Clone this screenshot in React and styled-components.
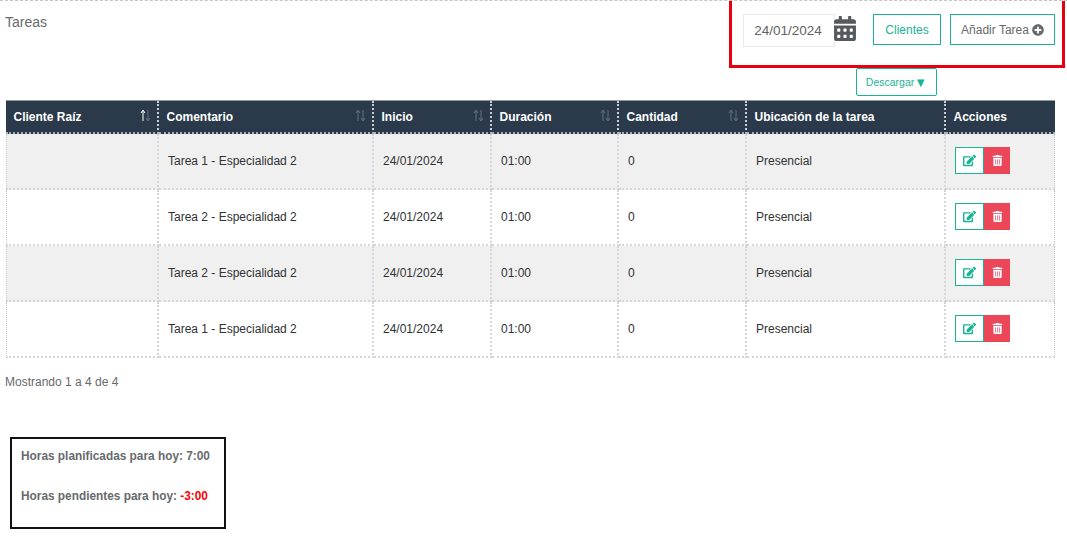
import React from 'react'
import styled, { createGlobalStyle } from 'styled-components'
import { FaCalendarAlt, FaEdit, FaPlusCircle, FaTrashAlt } from 'react-icons/fa'

const GREEN = '#1ab394'
const NAVY = '#2a3a4a'
const COLUMNS = '153px 215px 118px 127px 128px 199px 109px'

const GlobalStyle = createGlobalStyle`
  html, body {
    margin: 0;
    padding: 0;
    background: #fff;
  }
  body {
    font-family: "Liberation Sans", Arial, sans-serif;
    color: #676a6c;
  }
`

const Page = styled.div`
  width: 1067px;
  height: 536px;
  overflow: hidden;
  border-top: 1px dashed #c4c4c4;
  box-sizing: border-box;
`

const TopBar = styled.div`
  display: flex;
  justify-content: space-between;
  align-items: flex-start;
  padding: 0 2px 0 5px;
`

const Title = styled.h2`
  margin: 13px 0 0;
  font-size: 14px;
  line-height: 16px;
  font-weight: 400;
  color: #676a6c;
`

const Highlight = styled.div`
  display: flex;
  align-items: flex-start;
  width: 336px;
  height: 67px;
  box-sizing: border-box;
  padding: 13px 0 0 11px;
  border: 3px solid #e8000f;
  border-top: 0;
`

const DateInput = styled.div`
  width: 92px;
  height: 33px;
  box-sizing: border-box;
  padding-right: 2px;
  border: 1px solid #e9e9e9;
  font-size: 13.5px;
  line-height: 31px;
  text-align: center;
  color: #5f6264;
`

const CalendarIcon = styled(FaCalendarAlt)`
  width: 22px;
  height: 25px;
  margin: 2px 0 0 -1px;
  color: #565a5e;
`

const OutlineButton = styled.button`
  display: inline-flex;
  align-items: center;
  justify-content: center;
  gap: 3px;
  box-sizing: border-box;
  height: 31px;
  margin: 0 0 0 ${({ $gap }) => $gap}px;
  width: ${({ $width }) => $width}px;
  padding: 0;
  background: #fff;
  border: 1px solid ${GREEN};
  color: ${({ $dark }) => ($dark ? '#676a6c' : GREEN)};
  font-family: inherit;
  font-size: 12px;
`

const DownloadRow = styled.div`
  display: flex;
  justify-content: flex-end;
  padding-right: 130px;
`

const DownloadButton = styled.button`
  display: inline-flex;
  align-items: center;
  justify-content: center;
  width: 81px;
  height: 28px;
  box-sizing: border-box;
  padding: 0;
  background: #fff;
  border: 1px solid ${GREEN};
  border-radius: 2px;
  color: ${GREEN};
  font-family: inherit;
  font-size: 10.5px;
`

const DownloadArrow = styled.span`
  font-size: 13px;
  line-height: 13px;
`

const Table = styled.div`
  width: 1049px;
  margin: 4px 0 0 6px;
`

const HeadRow = styled.div`
  display: grid;
  grid-template-columns: ${COLUMNS};
  height: 34px;
  box-sizing: border-box;
  border-top: 1px solid #8f9aa5;
  background: ${NAVY};
`

const HeadCell = styled.div`
  position: relative;
  display: flex;
  align-items: center;
  box-sizing: border-box;
  padding-left: 7.5px;
  border-right: 2px dotted #c9ced3;
  border-bottom: 2px dotted #a9b1b9;
  color: #fff;
  font-size: 12px;
  font-weight: 700;

  &:last-child {
    border-right: 0;
  }
`

const SortMark = styled.svg`
  position: absolute;
  top: 8px;
  right: 6px;
  width: 11px;
  height: 13px;
  fill: none;
  stroke-width: 1;
`

const Row = styled.div`
  display: grid;
  grid-template-columns: ${COLUMNS};
  height: 56px;
  background: ${({ $striped }) => ($striped ? '#f0f0f0' : '#fff')};
`

const Cell = styled.div`
  display: flex;
  align-items: center;
  box-sizing: border-box;
  padding-left: 9px;
  border-left: ${({ $first }) => ($first ? '1px dotted #c4c4c4' : '0')};
  border-right: 2px dotted #d6d6d6;
  border-bottom: 2px dotted #d6d6d6;
  color: #303233;
  font-size: 12px;

  &:last-child {
    border-right: 1px dotted #c4c4c4;
  }
`

const Actions = styled.div`
  display: flex;
  margin-bottom: 2px;
`

const EditButton = styled.span`
  display: flex;
  align-items: center;
  justify-content: center;
  width: 29px;
  height: 27px;
  box-sizing: border-box;
  border: 1px solid ${GREEN};
  background: #fff;
  color: ${GREEN};
  font-size: 13px;
`

const DeleteButton = styled.span`
  display: flex;
  align-items: center;
  justify-content: center;
  width: 26px;
  height: 27px;
  background: #ec4758;
  color: #fff;
  font-size: 11px;
`

const Summary = styled.p`
  margin: 17px 0 0 5px;
  font-size: 12px;
  line-height: 14px;
  color: #676a6c;
`

const TotalsBox = styled.div`
  width: 216px;
  height: 92px;
  margin: 48px 0 0 10px;
  box-sizing: border-box;
  padding: 10px 0 0 9px;
  border: 2px solid #111;
`

const TotalsLine = styled.p`
  margin: 0 0 26px;
  font-size: 11.85px;
  line-height: 14px;
  font-weight: 700;
  color: #676a6c;
`

const Negative = styled.span`
  color: #f00;
`

const COLUMN_HEADS = [
  { label: 'Cliente Raíz', sort: 'active' },
  { label: 'Comentario', sort: 'idle' },
  { label: 'Inicio', sort: 'idle' },
  { label: 'Duración', sort: 'idle' },
  { label: 'Cantidad', sort: 'idle' },
  { label: 'Ubicación de la tarea' },
  { label: 'Acciones' },
]

const TASKS = [
  'Tarea 1 - Especialidad 2',
  'Tarea 2 - Especialidad 2',
  'Tarea 2 - Especialidad 2',
  'Tarea 1 - Especialidad 2',
]

const Sort = ({ active }) => (
  <SortMark viewBox="0 0 11 13">
    <path d="M3 12V2M1 4l2-3 2 3" stroke={active ? '#fff' : '#66727e'} />
    <path d="M8 1v10M6 9l2 3 2-3" stroke="#66727e" />
  </SortMark>
)

const App = () => (
  <Page>
    <GlobalStyle />
    <TopBar>
      <Title>Tareas</Title>
      <Highlight>
        <DateInput>24/01/2024</DateInput>
        <CalendarIcon />
        <OutlineButton $width={68} $gap={17}>
          Clientes
        </OutlineButton>
        <OutlineButton $width={105} $gap={9} $dark>
          Añadir Tarea <FaPlusCircle size={12} />
        </OutlineButton>
      </Highlight>
    </TopBar>
    <DownloadRow>
      <DownloadButton>
        Descargar<DownloadArrow>▼</DownloadArrow>
      </DownloadButton>
    </DownloadRow>
    <Table>
      <HeadRow>
        {COLUMN_HEADS.map(({ label, sort }) => (
          <HeadCell key={label}>
            {label}
            {sort && <Sort active={sort === 'active'} />}
          </HeadCell>
        ))}
      </HeadRow>
      {TASKS.map((task, index) => (
        <Row key={index} $striped={index % 2 === 0}>
          <Cell $first />
          <Cell>{task}</Cell>
          <Cell>24/01/2024</Cell>
          <Cell>01:00</Cell>
          <Cell>0</Cell>
          <Cell>Presencial</Cell>
          <Cell>
            <Actions>
              <EditButton>
                <FaEdit />
              </EditButton>
              <DeleteButton>
                <FaTrashAlt />
              </DeleteButton>
            </Actions>
          </Cell>
        </Row>
      ))}
    </Table>
    <Summary>Mostrando 1 a 4 de 4</Summary>
    <TotalsBox>
      <TotalsLine>Horas planificadas para hoy: 7:00</TotalsLine>
      <TotalsLine>
        Horas pendientes para hoy: <Negative>-3:00</Negative>
      </TotalsLine>
    </TotalsBox>
  </Page>
)

export default App
